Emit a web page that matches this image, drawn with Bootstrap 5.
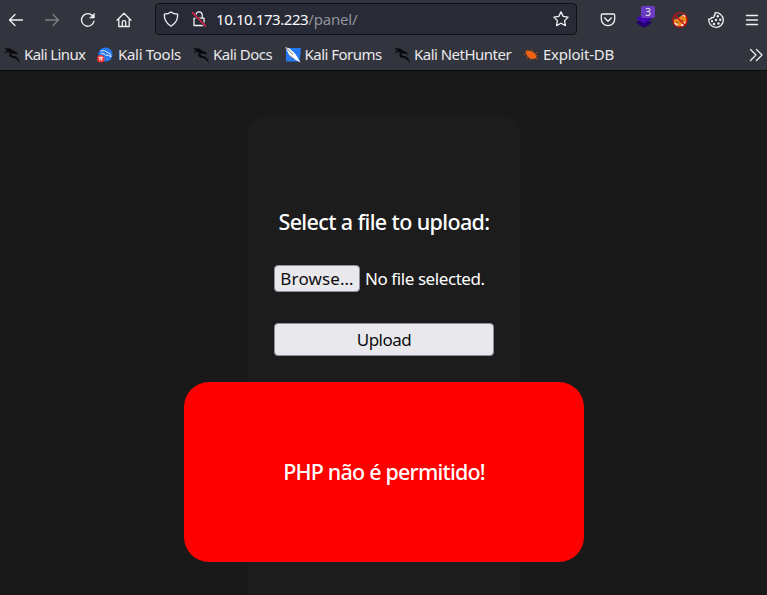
<!DOCTYPE html>
<html lang="pt-BR">
<head>
<meta charset="utf-8">
<meta name="viewport" content="width=device-width, initial-scale=1">
<title>Panel</title>
<link href="https://cdn.jsdelivr.net/npm/bootstrap@5.3.0/dist/css/bootstrap.min.css" rel="stylesheet">
<style>
body{background:#191919;color:#fff;font-family:"Noto Sans","Open Sans",sans-serif;height:595px;overflow:hidden}
svg{display:block;flex:none;overflow:visible}
.chrome{background:#33353e;height:71px;border-bottom:1px solid #0c0c0d;color:#e9e9eb}
.tools{height:39px;padding:0 7px 0 8px}
.nav-icons{gap:20px;width:147px}
.ico{fill:none;stroke:#f1f1f2;stroke-width:1.3;stroke-linecap:round;stroke-linejoin:round}
.address{width:422px;height:32px;margin-bottom:1px;background:#282a36;border:1px solid #101116;border-radius:4px;padding:0 7px;font-size:15px;letter-spacing:-.43px;color:#fbfbfe}
.url{margin-left:9px}
.path-part{color:#92939b;letter-spacing:-.2px}
.ext{gap:20px;margin-left:23px}
.count{position:absolute;left:5px;top:-6px;width:14px;height:12px;background:#6a3dc0;border-radius:2px;font-size:10px;line-height:12px;text-align:center}
.marks{display:grid;grid-template-columns:93px 96px 91.5px 109.5px 129px 1fr auto;height:31px;padding:0 4px;font-size:15px;letter-spacing:-.52px}
.mark-item{gap:4px;white-space:nowrap}
.mark-linux{letter-spacing:-.62px}
.mark-tools{gap:5px;letter-spacing:-.3px}
.mark-exploit{letter-spacing:-.22px}
.panel{width:273px;height:479px;margin:45px 0 0 247.5px;background:#1c1c1c;border-radius:20px 20px 0 0;padding-top:90px}
.msg{font-size:21.5px;line-height:32px;white-space:nowrap;letter-spacing:-.62px;font-weight:500}
.alert-red .msg{letter-spacing:-.8px}
.form-box{width:220px}
.ff{background:#e9e9ed;border:1px solid #8f8f9d;border-radius:4px;color:#0c0c10;font-size:17px;padding:0 0 1px;line-height:1;letter-spacing:-.5px}
.browse-row{margin-top:27px;height:27px}
.browse{width:86px;height:27px;flex:none;letter-spacing:.15px}
.status{font-size:17px;margin:1px 0 0 5px;white-space:nowrap;letter-spacing:-.42px}
.upload{height:33px;margin-top:31px}
.alert-red{width:400px;height:180px;background:red;border-radius:25px;margin:26px 0 0 -63.5px}
</style>
</head>
<body>
<svg width="0" height="0" class="position-absolute"><defs>
<g id="dragon"><path d="M.3 1 6 1.7 10.4 4.4 11.8 4.8 14 7.2 10.3 6.4Q7.5 5.7 7.2 7.5 7.4 9 10 9.2 14.8 9.7 15.6 15.8 12.8 11.2 9.5 10.7 5.2 10.2 5.4 7.4 5.6 5.7 6.8 5.2 3.5 4.8.4 6.2 2.6 3.9 5.5 3.9L1 3.4 4 2.8Z" stroke="#08080a" stroke-width=".3"/></g>
</defs></svg>
<header class="chrome">
 <div class="tools d-flex align-items-center">
  <div class="nav-icons d-flex align-items-center">
   <svg class="ico" width="16" height="16"><path d="M14.5 8H1.5M7 2.5 1.5 8 7 13.5"/></svg>
   <svg class="ico" width="16" height="16" opacity=".4"><path d="M1.5 8h13M9 2.5 14.5 8 9 13.5"/></svg>
   <svg class="ico" width="16" height="16"><path d="M14 9.2A6.3 6.3 0 1 1 12.5 3.7"/><path d="M14.4 1.5V6H9.9Z" fill="#f1f1f2" stroke-width=".6"/></svg>
   <svg class="ico" width="16" height="16"><path d="M1 8.2 8 1.2 15 8.2M2.8 7V14.5H13.2V7M6.3 14.5V10Q6.3 8.7 8 8.7T9.7 10V14.5"/></svg>
  </div>
  <div class="address d-flex align-items-center">
   <svg class="ico" width="16" height="16"><path d="M8 .9Q10.5 2.9 14.7 3.1 15 11.3 8 15.3 1 11.3 1.3 3.1 5.5 2.9 8 .9Z"/></svg>
   <svg class="ico ms-2 ps-1" width="20" height="16"><path d="M4.8 7V4.3A3.2 3.5 0 0 1 11.2 4.3V7M3 7.2H13V14.5H3Z"/><path d="M1.5 2 14.5 15" stroke="#282a36" stroke-width="3"/><path d="M1.5 1.5 14.5 15" stroke="#e22850" stroke-width="1.5"/></svg>
   <span class="url"><span>10.10.173.223</span><span class="path-part">/panel/</span></span>
   <svg class="ico ms-auto" width="16" height="16"><path d="M8 .9 10.2 5.4 15.1 6.1 11.6 9.6 12.4 14.6 8 12.2 3.6 14.6 4.4 9.6.9 6.1 5.8 5.4Z"/></svg>
  </div>
  <div class="ext d-flex align-items-center">
   <svg class="ico" width="16" height="16"><path d="M2.5 2H13.5Q14.7 2 14.7 3.2V7A6.7 6.7 0 0 1 1.3 7V3.2Q1.3 2 2.5 2ZM4.7 6 8 9.2 11.3 6"/></svg>
   <div class="position-relative"><svg width="16" height="16"><path d="M0 10.8 8 6 16 10.8 8 16Z" fill="#22006d"/><path d="M0 6.6 8 1.8 16 6.6 8 11.6Z" fill="#4505b0"/></svg><span class="count">3</span></div>
   <svg width="16" height="16"><path d="M1.5 7.5 5.5 6.5 9 4 13 2 14.8 6 14.5 11 10 14.5 5 14.5 2 12Z" fill="#ee871f"/><path d="M10 3.5 13 1.8 13.8 5ZM2 10.5 6 12 5 14.5 2.5 13ZM9.5 12 13.5 9.5 12 14 9 14.5Z" fill="#f3e9dd"/><circle cx="5" cy="10.2" r=".7" fill="#432"/><circle cx="10.5" cy="8.8" r=".7" fill="#432"/><circle cx="8" cy="8" r="7.2" fill="none" stroke="#c8100e" stroke-width="1.2"/><path d="M2.8 3 13 13.2" stroke="#c8100e" stroke-width="1.4"/></svg>
   <svg class="ico" width="16" height="16"><path d="M9 .8A7.3 7.3 0 1 0 15.2 7Q13 7.5 12.3 5.5 9.5 6 9.8 3.4 8.3 2.6 9 .8Z" transform="matrix(-1 0 0 1 16 0)"/><g fill="#f1f1f2" stroke="none"><circle cx="9.8" cy="4.2" r="1.2"/><circle cx="12.2" cy="7.8" r="1.2"/><circle cx="8" cy="8" r="1.2"/><circle cx="10.5" cy="11.5" r="1.2"/><circle cx="6" cy="12" r="1.2"/><circle cx="4" cy="9.2" r="1.1"/></g></svg>
   <svg class="ico" width="16" height="16"><path d="M2.5 3.5H13.5M2.5 8H13.5M2.5 12.5H13.5"/></svg>
  </div>
 </div>
 <div class="marks align-items-center">
  <div class="mark-item mark-linux d-flex align-items-center"><svg width="16" height="16"><use href="#dragon" fill="#08080a"/></svg><span>Kali Linux</span></div>
  <div class="mark-item mark-tools d-flex align-items-center"><svg width="16" height="16"><circle cx="8.5" cy="7.5" r="7" fill="#2878f0"/><path d="M3.5 4Q8 2.8 10 5.2 14 6 14 10 11 7.2 8.5 8.2 7.5 6 4 6.5" fill="none" stroke="#dbe9ff" stroke-width="1"/><circle cx="3.8" cy="11.8" r="3.8" fill="#ec3030"/><path d="M1.8 10.3H6M3 10.5V13.5M4.8 10.5V13.5" stroke="#fff" fill="none"/></svg><span>Kali Tools</span></div>
  <div class="mark-item d-flex align-items-center"><svg width="16" height="16"><use href="#dragon" fill="#08080a"/></svg><span>Kali Docs</span></div>
  <div class="mark-item d-flex align-items-center"><svg width="16" height="16"><path d="M1 1H16L14.5 14.5H1Z" fill="#2478f2"/><path d="M0 0 4.5 1.5 10 6.5 12 9.5 15.5 15.5 10 12.5 5 9.5 3 5.5Z" fill="#fff"/><path d="M.5.5 8 7.5M4.5 8.5 9 12" stroke="#333" stroke-width=".7"/></svg><span>Kali Forums</span></div>
  <div class="mark-item d-flex align-items-center"><svg width="16" height="16"><use href="#dragon" fill="#08080a"/></svg><span>Kali NetHunter</span></div>
  <div class="mark-item mark-exploit d-flex align-items-center"><svg width="16" height="16"><path d="M2.5 4Q6 2.5 10 5 13 6.5 13.5 11 8 13.5 5 10 3 7.5 2.5 4Z" fill="#ee6212"/><path d="M5 5 4 2.5M9 5V2.5M11.5 6.5 14.5 5.5M13 8.5 15 9M4 7 .5 7.5M5 10 3 11.5M8 11.5 7 13.5M13 11 14.5 13" stroke="#b94d18" stroke-width=".9"/></svg><span>Exploit-DB</span></div>
  <svg class="ico" width="14" height="14"><path d="M1.5 1.5 7 7 1.5 12.5M7.5 1.5 13 7 7.5 12.5"/></svg>
 </div>
</header>
<main class="panel">
 <div class="msg text-center">Select a file to upload:</div>
 <div class="form-box mx-auto">
  <div class="browse-row d-flex align-items-center">
   <button class="ff browse">Browse…</button><span class="status">No file selected.</span>
  </div>
  <button class="ff upload d-block w-100">Upload</button>
 </div>
 <div class="alert-red d-flex align-items-center justify-content-center"><span class="msg">PHP não é permitido!</span></div>
</main>
<script src="https://cdn.jsdelivr.net/npm/bootstrap@5.3.0/dist/js/bootstrap.bundle.min.js"></script>
</body>
</html>
